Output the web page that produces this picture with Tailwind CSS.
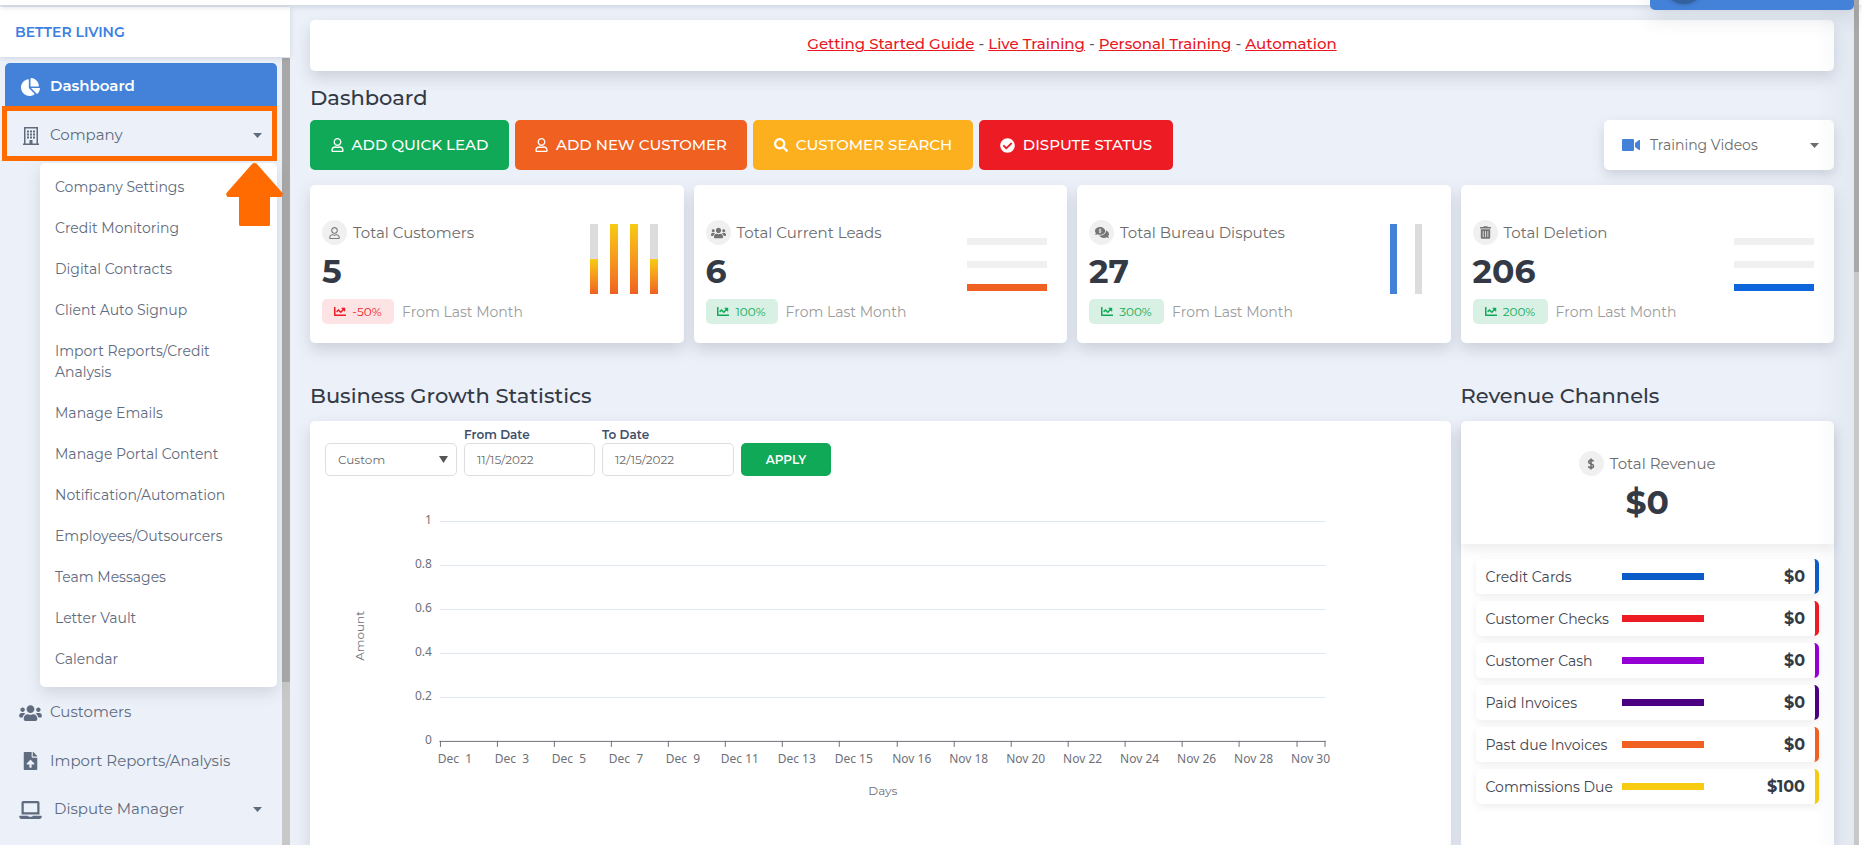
<!DOCTYPE html>
<html lang="en">
<head>
<meta charset="utf-8">
<meta name="viewport" content="width=device-width, initial-scale=1">
<title>Dashboard</title>
<script src="https://cdn.jsdelivr.net/npm/@tailwindcss/browser@4"></script>
</head>
<body class="relative h-screen overflow-hidden bg-[#ecf1f9] font-['Montserrat','Inter',sans-serif] text-[#5f6b7e]">

<svg class="hidden" aria-hidden="true">
  <symbol id="pie" viewBox="0 0 544 512"><path d="M527.79 288H290.5l158.03 158.03c6.04 6.04 15.98 6.53 22.19.68 38.7-36.46 65.32-85.61 73.13-140.86 1.34-9.46-6.51-17.85-16.06-17.85zm-15.83-64.8C503.72 103.74 408.26 8.28 288.8.04 279.68-.59 272 7.1 272 16.24V240h223.77c9.14 0 16.82-7.68 16.19-16.8zM224 288V50.71c0-9.55-8.39-17.4-17.84-16.06C86.99 51.49-4.1 155.6.14 280.37 4.5 408.51 114.83 513.59 243.03 511.98c50.4-.63 96.97-16.87 135.26-44.03 7.9-5.6 8.42-17.23 1.57-24.08L224 288z"/></symbol>
  <symbol id="building" viewBox="0 0 16 18"><path fill-rule="evenodd" d="M1 0h14v16.500h1V18H0v-1.500h1zM2.500 1.500v15H6.500V13h3v3.500h4v-15zM4 3.500h2v2H4zm3 0h2v2H7zm3 0h2v2h-2zM4 6.500h2v2H4zm3 0h2v2H7zm3 0h2v2h-2zM4 9.500h2v2H4zm3 0h2v2H7zm3 0h2v2h-2z"/></symbol>
  <symbol id="users" viewBox="0 0 640 512"><path d="M96 224c35.3 0 64-28.7 64-64s-28.7-64-64-64-64 28.7-64 64 28.7 64 64 64zm448 0c35.3 0 64-28.7 64-64s-28.7-64-64-64-64 28.7-64 64 28.7 64 64 64zm32 32h-64c-17.6 0-33.5 7.1-45.1 18.6 40.3 22.1 68.9 62 75.1 109.4h66c17.700 0 32-14.300 32-32v-32c0-35.300-28.700-64-64-64zm-256 0c61.900 0 112-50.100 112-112S381.900 32 320 32 208 82.100 208 144s50.100 112 112 112zm76.800 32h-8.300c-20.800 10-43.900 16-68.500 16s-47.600-6-68.500-16h-8.300C179.600 288 128 339.600 128 403.200V432c0 26.500 21.500 48 48 48h288c26.500 0 48-21.500 48-48v-28.800c0-63.600-51.600-115.200-115.200-115.200zm-223.700-13.400C161.500 263.100 145.600 256 128 256H64c-35.300 0-64 28.700-64 64v32c0 17.700 14.300 32 32 32h65.900c6.300-47.400 34.900-87.300 75.200-109.400z"/></symbol>
  <symbol id="upload" viewBox="0 0 384 512"><path d="M224 136V0H24C10.7 0 0 10.7 0 24v464c0 13.3 10.7 24 24 24h336c13.3 0 24-10.7 24-24V160H248c-13.2 0-24-10.8-24-24zm65.18 216.01H224v80c0 8.84-7.16 16-16 16h-32c-8.84 0-16-7.16-16-16v-80H94.82c-14.28 0-21.41-17.29-11.27-27.36l96.42-95.7c6.65-6.61 17.39-6.61 24.04 0l96.42 95.7c10.15 10.07 3.03 27.36-11.25 27.36zM377 105L279.1 7c-4.5-4.5-10.6-7-17-7H256v128h128v-6.1c0-6.3-2.5-12.4-7-16.9z"/></symbol>
  <symbol id="laptop" viewBox="0 0 640 512"><path d="M624 416H381.54c-.74 19.81-14.71 32-32.74 32H288c-18.69 0-33.02-17.47-32.77-32H16c-8.8 0-16 7.2-16 16v16c0 35.2 28.8 64 64 64h512c35.2 0 64-28.8 64-64v-16c0-8.8-7.2-16-16-16zM576 48c0-26.4-21.6-48-48-48H112C85.6 0 64 21.6 64 48v336h512V48zm-64 272H128V64h384v256z"/></symbol>
  <symbol id="user" viewBox="0 0 448 512"><path d="M313.6 304c-28.7 0-42.5 16-89.6 16-47.1 0-60.8-16-89.6-16C60.2 304 0 364.2 0 438.4V464c0 26.5 21.5 48 48 48h352c26.5 0 48-21.5 48-48v-25.6c0-74.2-60.2-134.4-134.4-134.4zM400 464H48v-25.6c0-47.6 38.8-86.4 86.4-86.4 14.6 0 38.3 16 89.6 16 51.7 0 74.9-16 89.6-16 47.6 0 86.4 38.8 86.4 86.4V464zM224 288c79.5 0 144-64.5 144-144S303.5 0 224 0 80 64.5 80 144s64.500 144 144 144zm0-240c52.900 0 96 43.100 96 96s-43.100 96-96 96-96-43.100-96-96 43.100-96 96-96z"/></symbol>
  <symbol id="search" viewBox="0 0 512 512"><path d="M505 442.7L405.3 343c-4.5-4.5-10.6-7-17-7H372c27.600-35.300 44-79.700 44-128C416 93.100 322.900 0 208 0S0 93.100 0 208s93.100 208 208 208c48.300 0 92.700-16.400 128-44v16.300c0 6.400 2.500 12.500 7 17l99.700 99.700c9.400 9.400 24.600 9.400 33.900 0l28.300-28.300c9.400-9.400 9.400-24.600.1-34zM208 336c-70.700 0-128-57.200-128-128 0-70.700 57.200-128 128-128 70.700 0 128 57.200 128 128 0 70.700-57.200 128-128 128z"/></symbol>
  <symbol id="check" viewBox="0 0 512 512"><path d="M504 256c0 136.967-111.033 248-248 248S8 392.967 8 256 119.033 8 256 8s248 111.033 248 248zM227.314 387.314l184-184c6.248-6.248 6.248-16.379 0-22.627l-22.627-22.627c-6.248-6.249-16.379-6.249-22.628 0L216 308.118l-70.059-70.059c-6.248-6.248-16.379-6.248-22.628 0l-22.627 22.627c-6.248 6.248-6.248 16.379 0 22.627l104 104c6.249 6.249 16.379 6.249 22.628.001z"/></symbol>
  <symbol id="video" viewBox="0 0 18 12"><path d="M1 0h10a1 1 0 0 1 1 1v10a1 1 0 0 1-1 1H1a1 1 0 0 1-1-1V1a1 1 0 0 1 1-1zM13 4l4-3h1v10h-1l-4-3z"/></symbol>
  <symbol id="trend" viewBox="0 64 512 384"><path d="M496 384H64V80c0-8.84-7.16-16-16-16H16C7.16 64 0 71.16 0 80v336c0 17.67 14.33 32 32 32h464c8.84 0 16-7.16 16-16v-32c0-8.84-7.16-16-16-16zM464 96H345.94c-21.38 0-32.09 25.85-16.97 40.97l32.4 32.4L288 242.75l-73.37-73.37c-12.5-12.5-32.76-12.5-45.25 0l-68.69 68.69c-6.25 6.25-6.25 16.38 0 22.63l22.62 22.62c6.25 6.25 16.38 6.25 22.63 0L192 237.25l73.37 73.37c12.5 12.5 32.76 12.5 45.25 0l96-96 32.4 32.4c15.12 15.12 40.97 4.41 40.97-16.97V112c.01-8.84-7.15-16-15.99-16z"/></symbol>
  <symbol id="trash" viewBox="0 0 448 512"><path d="M32 464a48 48 0 0 0 48 48h288a48 48 0 0 0 48-48V128H32zm272-256a16 16 0 0 1 32 0v224a16 16 0 0 1-32 0zm-96 0a16 16 0 0 1 32 0v224a16 16 0 0 1-32 0zm-96 0a16 16 0 0 1 32 0v224a16 16 0 0 1-32 0zM432 32H312l-9.4-18.7A24 24 0 0 0 281.1 0H166.8a23.72 23.72 0 0 0-21.4 13.3L136 32H16A16 16 0 0 0 0 48v32a16 16 0 0 0 16 16h416a16 16 0 0 0 16-16V48a16 16 0 0 0-16-16z"/></symbol>
  <symbol id="comments" viewBox="0 32 576 448"><path d="M416 192c0-88.4-93.1-160-208-160S0 103.6 0 192c0 34.3 14.1 65.900 38 92-13.400 30.200-35.500 54.200-35.800 54.500-2.200 2.300-2.800 5.700-1.500 8.700S4.800 352 8 352c36.600 0 66.900-12.300 88.700-25 32.200 15.700 70.300 25 111.300 25 114.900 0 208-71.600 208-160zm122 220c23.900-26 38-57.700 38-92 0-66.900-53.500-124.200-129.300-148.100.9 6.600 1.300 13.300 1.300 20.100 0 105.900-107.700 192-240 192-10.800 0-21.300-.8-31.700-1.900C207.800 439.600 281.800 480 368 480c41 0 79.100-9.200 111.300-25 21.800 12.700 52.100 25 88.700 25 3.200 0 6.100-1.900 7.300-4.800 1.300-2.900.7-6.300-1.500-8.700-.3-.3-22.400-24.200-35.800-54.500z"/><path d="M258 140c-20-14-92-18-92 20 0 40 90 22 90 62 0 38-74 34-98 14M208 96v192" fill="none" stroke="#f0f0f0" stroke-width="30"/></symbol>
  <symbol id="dollar" viewBox="0 0 8 14"><path d="M7 4C6.500 2.900 5.400 2.500 4 2.500 2.400 2.500 1.200 3.300 1.200 4.700 1.200 7.600 6.900 6.200 6.900 9.200 6.900 10.700 5.600 11.500 4 11.500 2.500 11.500 1.400 11 .8 9.800M4 .5v13" fill="none" stroke="currentColor" stroke-width="1.800"/></symbol>
  <symbol id="caret" viewBox="0 0 9 5"><path d="M0 0h9L4.500 5z"/></symbol>
</svg>

<div class="flex h-full flex-col">
  <div class="z-20 h-[5px] shrink-0 bg-white shadow-[0_1px_6px_rgba(60,75,100,.25)]"></div>

  <div class="flex min-h-0 flex-1">
    <!-- Sidebar -->
    <aside class="flex w-[290px] shrink-0 flex-col pt-[2px]">
      <div class="z-10 flex h-[50px] shrink-0 items-center bg-white pl-[15px] pb-[1px] text-sm font-semibold text-[#3c80e2] shadow-[0_1px_6px_rgba(60,75,100,.18)]"><a href="#">BETTER LIVING</a></div>
      <div class="flex min-h-0 flex-1">
        <nav class="relative min-w-0 flex-1 pt-[6px] pr-[5px] pl-[5px] text-[15px]">
          <a href="#" class="flex h-12 items-center rounded-[5px] bg-[#4482da] pb-[2px] pl-4 font-semibold text-white"><span class="mr-[10px] w-[19px] pt-[2px]"><svg class="h-[18px] w-[19px] fill-current"><use href="#pie"/></svg></span>Dashboard</a>
          <button type="button" aria-expanded="true" class="flex h-[49px] w-full items-center pr-[15px] pl-4"><span class="mr-[10px] flex w-[19px] justify-center"><svg class="h-[18px] w-4 fill-current"><use href="#building"/></svg></span>Company<svg class="ml-auto h-[5px] w-[9px] fill-current"><use href="#caret"/></svg></button>
          <ul class="mt-[3px] mb-[1px] ml-[35px] rounded-[5px] bg-white pt-1 pb-[7px] pl-[15px] text-sm leading-[21px] shadow-[0_6px_15px_rgba(50,60,80,.15)]">
            <li><a href="#" class="block py-[10px]">Company Settings</a></li>
            <li><a href="#" class="block py-[10px]">Credit Monitoring</a></li>
            <li><a href="#" class="block py-[10px]">Digital Contracts</a></li>
            <li><a href="#" class="block py-[10px]">Client Auto Signup</a></li>
            <li><a href="#" class="block py-[10px]">Import Reports/Credit<br>Analysis</a></li>
            <li><a href="#" class="block py-[10px]">Manage Emails</a></li>
            <li><a href="#" class="block py-[10px]">Manage Portal Content</a></li>
            <li><a href="#" class="block py-[10px]">Notification/Automation</a></li>
            <li><a href="#" class="block py-[10px]">Employees/Outsourcers</a></li>
            <li><a href="#" class="block py-[10px]">Team Messages</a></li>
            <li><a href="#" class="block py-[10px]">Letter Vault</a></li>
            <li><a href="#" class="block py-[10px]">Calendar</a></li>
          </ul>
          <a href="#" class="flex h-[49px] items-center pl-[14px]"><svg class="mr-2 h-[18px] w-[23px] fill-current"><use href="#users"/></svg>Customers</a>
          <a href="#" class="flex h-12 items-center pl-[14px]"><svg class="mr-2 h-[18px] w-[23px] fill-current"><use href="#upload"/></svg>Import Reports/Analysis</a>
          <button type="button" class="flex h-[49px] w-full items-center pr-[15px] pl-[14px]"><svg class="mr-3 h-[18px] w-[23px] fill-current"><use href="#laptop"/></svg>Dispute Manager<svg class="ml-auto h-[5px] w-[9px] fill-current"><use href="#caret"/></svg></button>
          <!-- Callout marking the Company entry -->
          <div class="pointer-events-none absolute top-[49px] right-[5px] left-[2px] h-[55px] border-[5px] border-[#ff6b00]"></div>
          <svg class="pointer-events-none absolute top-[106px] -right-px z-10 h-[63px] w-[57px] fill-[#ff6b00]" viewBox="0 0 57 63"><path d="M26.500.500q2-1 4 0L56.500 30q1 2-1 4H44v27.500q0 1.500-1.500 1.500h-28Q13 63 13 61.500V34H1.500q-2-2-1-4z"/></svg>
        </nav>
        <div class="mt-[1px] w-2 bg-[#c8c8c8]"><div class="h-[624px] bg-[#a8a8a8]"></div></div>
      </div>
    </aside>

    <!-- Page content -->
    <main class="min-w-0 flex-1 overflow-hidden pt-[15px] pr-5 pl-5">
      <p class="flex h-[51px] items-center justify-center rounded-[5px] bg-white pb-[2px] text-[15px] font-medium whitespace-pre text-[#55606e] shadow-[0_7px_15px_rgba(30,50,70,.16)]"><a href="#" class="text-[#e8171f] underline">Getting Started Guide</a> - <a href="#" class="text-[#e8171f] underline">Live Training</a> - <a href="#" class="text-[#e8171f] underline">Personal Training</a> - <a href="#" class="text-[#e8171f] underline">Automation</a></p>

      <h1 class="mt-[13px] mb-[8px] text-[21px] leading-7 font-medium text-[#343a45]">Dashboard</h1>

      <div class="flex h-[50px] gap-[6px] text-[15px] font-medium text-white">
        <button type="button" class="flex w-[199px] items-center justify-center gap-2 rounded-[5px] bg-[#10a957]"><svg class="h-[14px] w-[13px] fill-current"><use href="#user"/></svg>ADD QUICK LEAD</button>
        <button type="button" class="flex w-[232px] items-center justify-center gap-2 rounded-[5px] bg-[#f06021]"><svg class="h-[14px] w-[13px] fill-current"><use href="#user"/></svg>ADD NEW CUSTOMER</button>
        <button type="button" class="flex w-[220px] items-center justify-center gap-2 rounded-[5px] bg-[#fdb01e]"><svg class="h-[14px] w-[14px] fill-current"><use href="#search"/></svg>CUSTOMER SEARCH</button>
        <button type="button" class="flex w-[194px] items-center justify-center gap-2 rounded-[5px] bg-[#ec1b24]"><svg class="h-[15px] w-[15px] fill-current"><use href="#check"/></svg>DISPUTE STATUS</button>
        <button type="button" class="ml-auto flex w-[230px] items-center rounded-[5px] bg-white pr-[15px] pl-[18px] font-normal text-[#6c6c6c] shadow-[0_5px_12px_rgba(50,60,80,.18)]"><svg class="mr-[10px] h-3 w-[18px] fill-[#4482da]"><use href="#video"/></svg><span class="text-sm">Training Videos</span><svg class="ml-auto h-[5px] w-[9px] fill-current"><use href="#caret"/></svg></button>
      </div>

      <div class="mt-[15px] grid grid-cols-4 gap-x-[10px] text-[#6c6c6c]">
        <section class="flex h-[158px] items-center justify-between rounded-[5px] bg-white pr-[26px] pl-3 shadow-[0_7px_15px_rgba(40,50,70,.17)]">
          <div class="pt-4">
            <h2 class="flex items-center gap-[6px] text-[15px] leading-[25px]"><span class="flex h-[25px] w-[25px] items-center justify-center rounded-full bg-[#f0f0f0]"><svg class="h-3 w-[11px] fill-[#7d7d7d]"><use href="#user"/></svg></span>Total Customers</h2>
            <p class="mt-[6px] mb-[7px] text-[33px] leading-[41px] font-bold text-[#343a45]">5</p>
            <p class="flex items-center gap-2 text-sm leading-5 text-[#9c9c9c]"><span class="flex h-[25px] w-[72px] items-center justify-center gap-[6px] rounded-[5px] bg-[#fee3e4] text-xs text-[#ec1b24]"><svg class="h-[9px] w-3 fill-current"><use href="#trend"/></svg>-50%</span>From Last Month</p>
          </div>
          <div class="flex h-20 gap-3 pb-[10px]">
            <i class="flex w-2 items-end bg-[#dcdcdc]"><i class="h-1/2 w-full bg-linear-to-b from-[#f6cb12] to-[#f06021]"></i></i>
            <i class="w-2 bg-linear-to-b from-[#f6cb12] to-[#f06021]"></i>
            <i class="w-2 bg-linear-to-b from-[#f6cb12] to-[#f06021]"></i>
            <i class="flex w-2 items-end bg-[#dcdcdc]"><i class="h-1/2 w-full bg-linear-to-b from-[#f6cb12] to-[#f06021]"></i></i>
          </div>
        </section>
        <section class="flex h-[158px] items-center justify-between rounded-[5px] bg-white pr-5 pl-3 shadow-[0_7px_15px_rgba(40,50,70,.17)]">
          <div class="pt-4">
            <h2 class="flex items-center gap-[6px] text-[15px] leading-[25px]"><span class="flex h-[25px] w-[25px] items-center justify-center rounded-full bg-[#f0f0f0]"><svg class="h-3 w-[15px] fill-[#747474]"><use href="#users"/></svg></span>Total Current Leads</h2>
            <p class="mt-[6px] mb-[7px] text-[33px] leading-[41px] font-bold text-[#343a45]">6</p>
            <p class="flex items-center gap-2 text-sm leading-5 text-[#9c9c9c]"><span class="flex h-[25px] w-[72px] items-center justify-center gap-[6px] rounded-[5px] bg-[#d8f1e4] text-xs text-[#10a957]"><svg class="h-[9px] w-3 fill-current"><use href="#trend"/></svg>100%</span>From Last Month</p>
          </div>
          <div class="flex w-20 flex-col gap-4">
            <i class="h-[7px] bg-[#f0f0f0]"></i><i class="h-[7px] bg-[#f0f0f0]"></i><i class="h-[7px] bg-[#f06021]"></i>
          </div>
        </section>
        <section class="flex h-[158px] items-center justify-between rounded-[5px] bg-white pr-[29px] pl-3 shadow-[0_7px_15px_rgba(40,50,70,.17)]">
          <div class="pt-4">
            <h2 class="flex items-center gap-[6px] text-[15px] leading-[25px]"><span class="flex h-[25px] w-[25px] items-center justify-center rounded-full bg-[#f0f0f0]"><svg class="h-[11px] w-[14px] fill-[#747474]"><use href="#comments"/></svg></span>Total Bureau Disputes</h2>
            <p class="mt-[6px] mb-[7px] text-[33px] leading-[41px] font-bold text-[#343a45]">27</p>
            <p class="flex items-center gap-2 text-sm leading-5 text-[#9c9c9c]"><span class="flex h-[25px] w-[75px] items-center justify-center gap-[6px] rounded-[5px] bg-[#d8f1e4] text-xs text-[#10a957]"><svg class="h-[9px] w-3 fill-current"><use href="#trend"/></svg>300%</span>From Last Month</p>
          </div>
          <div class="flex h-20 gap-[18px] pb-[10px]"><i class="w-[7px] bg-[#4482da]"></i><i class="w-[7px] bg-[#dcdcdc]"></i></div>
        </section>
        <section class="flex h-[158px] items-center justify-between rounded-[5px] bg-white pr-5 pl-3 shadow-[0_7px_15px_rgba(40,50,70,.17)]">
          <div class="pt-4">
            <h2 class="flex items-center gap-[6px] text-[15px] leading-[25px]"><span class="flex h-[25px] w-[25px] items-center justify-center rounded-full bg-[#f0f0f0]"><svg class="h-[13px] w-[11px] fill-[#747474]"><use href="#trash"/></svg></span>Total Deletion</h2>
            <p class="mt-[6px] mb-[7px] text-[33px] leading-[41px] font-bold text-[#343a45]">206</p>
            <p class="flex items-center gap-2 text-sm leading-5 text-[#9c9c9c]"><span class="flex h-[25px] w-[75px] items-center justify-center gap-[6px] rounded-[5px] bg-[#d8f1e4] text-xs text-[#10a957]"><svg class="h-[9px] w-3 fill-current"><use href="#trend"/></svg>200%</span>From Last Month</p>
          </div>
          <div class="flex w-20 flex-col gap-4">
            <i class="h-[7px] bg-[#f0f0f0]"></i><i class="h-[7px] bg-[#f0f0f0]"></i><i class="h-[7px] bg-[#0d66dc]"></i>
          </div>
        </section>

        <h2 class="col-span-3 mt-[39px] mb-[11px] text-[21px] leading-7 font-medium text-[#343a45]">Business Growth Statistics</h2>
        <h2 class="mt-[39px] mb-[11px] text-[21px] leading-7 font-medium text-[#343a45]">Revenue Channels</h2>

        <section class="col-span-3 rounded-[5px] bg-white pt-[6px] pb-8 shadow-[0_7px_15px_rgba(40,50,70,.17)]">
          <form class="flex items-end gap-[7px] pl-[15px] text-xs">
            <div class="relative w-[132px] text-[#6a6a6a]">
              <select aria-label="Period" class="h-[33px] w-full appearance-none rounded-[5px] border border-[#dedede] bg-white pl-3"><option>Custom</option></select>
              <svg class="pointer-events-none absolute top-[13px] right-[9px] h-[7px] w-[9px] fill-[#555]" viewBox="0 0 9 7"><path d="M0 0h9L4.500 7z"/></svg>
            </div>
            <label class="block w-[131px] font-semibold text-[#40506a]"><span class="block leading-4">From Date</span><input type="text" value="11/15/2022" class="block h-[33px] w-full rounded-[5px] border border-[#dedede] pl-3 font-normal text-[#6a6a6a]"></label>
            <label class="block w-[132px] font-semibold text-[#40506a]"><span class="block leading-4">To Date</span><input type="text" value="12/15/2022" class="block h-[33px] w-full rounded-[5px] border border-[#dedede] pl-3 font-normal text-[#6a6a6a]"></label>
            <button type="button" class="h-[33px] w-[90px] rounded-[5px] bg-[#10a957] font-semibold text-white">APPLY</button>
          </form>
          <svg class="block h-auto w-full font-['Noto_Sans',sans-serif] text-xs" viewBox="0 0 1141 340" fill="#6e7079">
            <path d="M130 45.500h886M130 89.500h886M130 133.500h886M130 177.500h886M130 221.500h886" stroke="#e0e6f1"/>
            <path d="M129.500 265.500h886.500M130.500 265v6M187.500 265v6M244.500 265v6M301.500 265v6M358.500 265v6M415.500 265v6M472.500 265v6M529.500 265v6M587.500 265v6M644.500 265v6M701.500 265v6M758.500 265v6M815.500 265v6M872.500 265v6M929.500 265v6M987.500 265v6M1015.500 265v6" stroke="#6e7079" fill="none"/>
            <g text-anchor="end"><text x="122" y="48">1</text><text x="122" y="92">0.8</text><text x="122" y="136">0.6</text><text x="122" y="180">0.4</text><text x="122" y="224">0.2</text><text x="122" y="268">0</text></g>
            <g text-anchor="middle">
              <text x="145" y="287">Dec&nbsp;&nbsp;1</text><text x="202" y="287">Dec&nbsp;&nbsp;3</text><text x="259" y="287">Dec&nbsp;&nbsp;5</text><text x="316" y="287">Dec&nbsp;&nbsp;7</text><text x="373" y="287">Dec&nbsp;&nbsp;9</text><text x="430" y="287">Dec 11</text><text x="487" y="287">Dec 13</text><text x="544" y="287">Dec 15</text><text x="602" y="287">Nov 16</text><text x="659" y="287">Nov 18</text><text x="716" y="287">Nov 20</text><text x="773" y="287">Nov 22</text><text x="830" y="287">Nov 24</text><text x="887" y="287">Nov 26</text><text x="944" y="287">Nov 28</text><text x="1001" y="287">Nov 30</text>
            </g>
            <g text-anchor="middle" class="font-['Montserrat','Inter',sans-serif]"><text x="573" y="319">Days</text><text transform="translate(54 160) rotate(-90)">Amount</text></g>
          </svg>
        </section>

        <section class="rounded-[5px] bg-white text-[#3f4550] shadow-[0_7px_15px_rgba(40,50,70,.17)]">
          <div class="flex h-[123px] flex-col items-center rounded-t-[5px] pt-[30px] shadow-[0_6px_12px_rgba(0,0,0,.07)]">
            <h3 class="flex items-center gap-[6px] text-[15px] leading-[25px] text-[#6c6c6c]"><span class="flex h-[25px] w-[25px] items-center justify-center rounded-full bg-[#f0f0f0]"><svg class="h-3 w-2"><use href="#dollar"/></svg></span>Total Revenue</h3>
            <p class="mt-[6px] text-[33px] leading-[41px] font-bold text-[#343a45]">$0</p>
          </div>
          <ul class="flex flex-col gap-[7px] px-[15px] pt-[15px] text-sm">
            <li class="flex h-[35px] items-center rounded-[5px] border-r-4 border-[#0b5cc8] bg-white pr-[10px] pl-[10px] shadow-[0_3px_8px_rgba(0,0,0,.07)]"><span class="w-[136px]">Credit Cards</span><i class="h-[7px] w-[82px] bg-[#0b5cc8]"></i><b class="ml-auto text-base font-bold text-[#343a45]">$0</b></li>
            <li class="flex h-[35px] items-center rounded-[5px] border-r-4 border-[#ec1b24] bg-white pr-[10px] pl-[10px] shadow-[0_3px_8px_rgba(0,0,0,.07)]"><span class="w-[136px]">Customer Checks</span><i class="h-[7px] w-[82px] bg-[#ec1b24]"></i><b class="ml-auto text-base font-bold text-[#343a45]">$0</b></li>
            <li class="flex h-[35px] items-center rounded-[5px] border-r-4 border-[#9400d3] bg-white pr-[10px] pl-[10px] shadow-[0_3px_8px_rgba(0,0,0,.07)]"><span class="w-[136px]">Customer Cash</span><i class="h-[7px] w-[82px] bg-[#9400d3]"></i><b class="ml-auto text-base font-bold text-[#343a45]">$0</b></li>
            <li class="flex h-[35px] items-center rounded-[5px] border-r-4 border-[#4b0082] bg-white pr-[10px] pl-[10px] shadow-[0_3px_8px_rgba(0,0,0,.07)]"><span class="w-[136px]">Paid Invoices</span><i class="h-[7px] w-[82px] bg-[#4b0082]"></i><b class="ml-auto text-base font-bold text-[#343a45]">$0</b></li>
            <li class="flex h-[35px] items-center rounded-[5px] border-r-4 border-[#f06021] bg-white pr-[10px] pl-[10px] shadow-[0_3px_8px_rgba(0,0,0,.07)]"><span class="w-[136px]">Past due Invoices</span><i class="h-[7px] w-[82px] bg-[#f06021]"></i><b class="ml-auto text-base font-bold text-[#343a45]">$0</b></li>
            <li class="flex h-[35px] items-center rounded-[5px] border-r-4 border-[#f6cb12] bg-white pr-[10px] pl-[10px] shadow-[0_3px_8px_rgba(0,0,0,.07)]"><span class="w-[136px]">Commissions Due</span><i class="h-[7px] w-[82px] bg-[#f6cb12]"></i><b class="ml-auto text-base font-bold text-[#343a45]">$100</b></li>
          </ul>
        </section>
      </div>
    </main>
    <div class="w-2 shrink-0 bg-white"></div>
  </div>
</div>

<!-- Page scrollbar -->
<div class="absolute inset-y-0 right-[3px] z-30 w-[5px] bg-[#c8c8c8]"><div class="h-[272px] bg-[#a8a8a8]"></div></div>
<div class="pointer-events-none absolute inset-y-0 right-2 z-20 w-10 bg-linear-to-l from-[#32465f]/5 to-transparent"></div>
<!-- Bottom edge of the profile panel -->
<div class="absolute top-0 right-2 z-30 h-[10px] w-[204px] rounded-b-[5px] bg-[#4482da] shadow-[0_4px_20px_rgba(50,60,80,.25)]"><div class="h-full overflow-hidden"><div class="-mt-[36px] ml-[14px] h-10 w-10 rounded-full bg-[#33619f] shadow-[0_0_5px_#33619f]"></div></div></div>
</body>
</html>
